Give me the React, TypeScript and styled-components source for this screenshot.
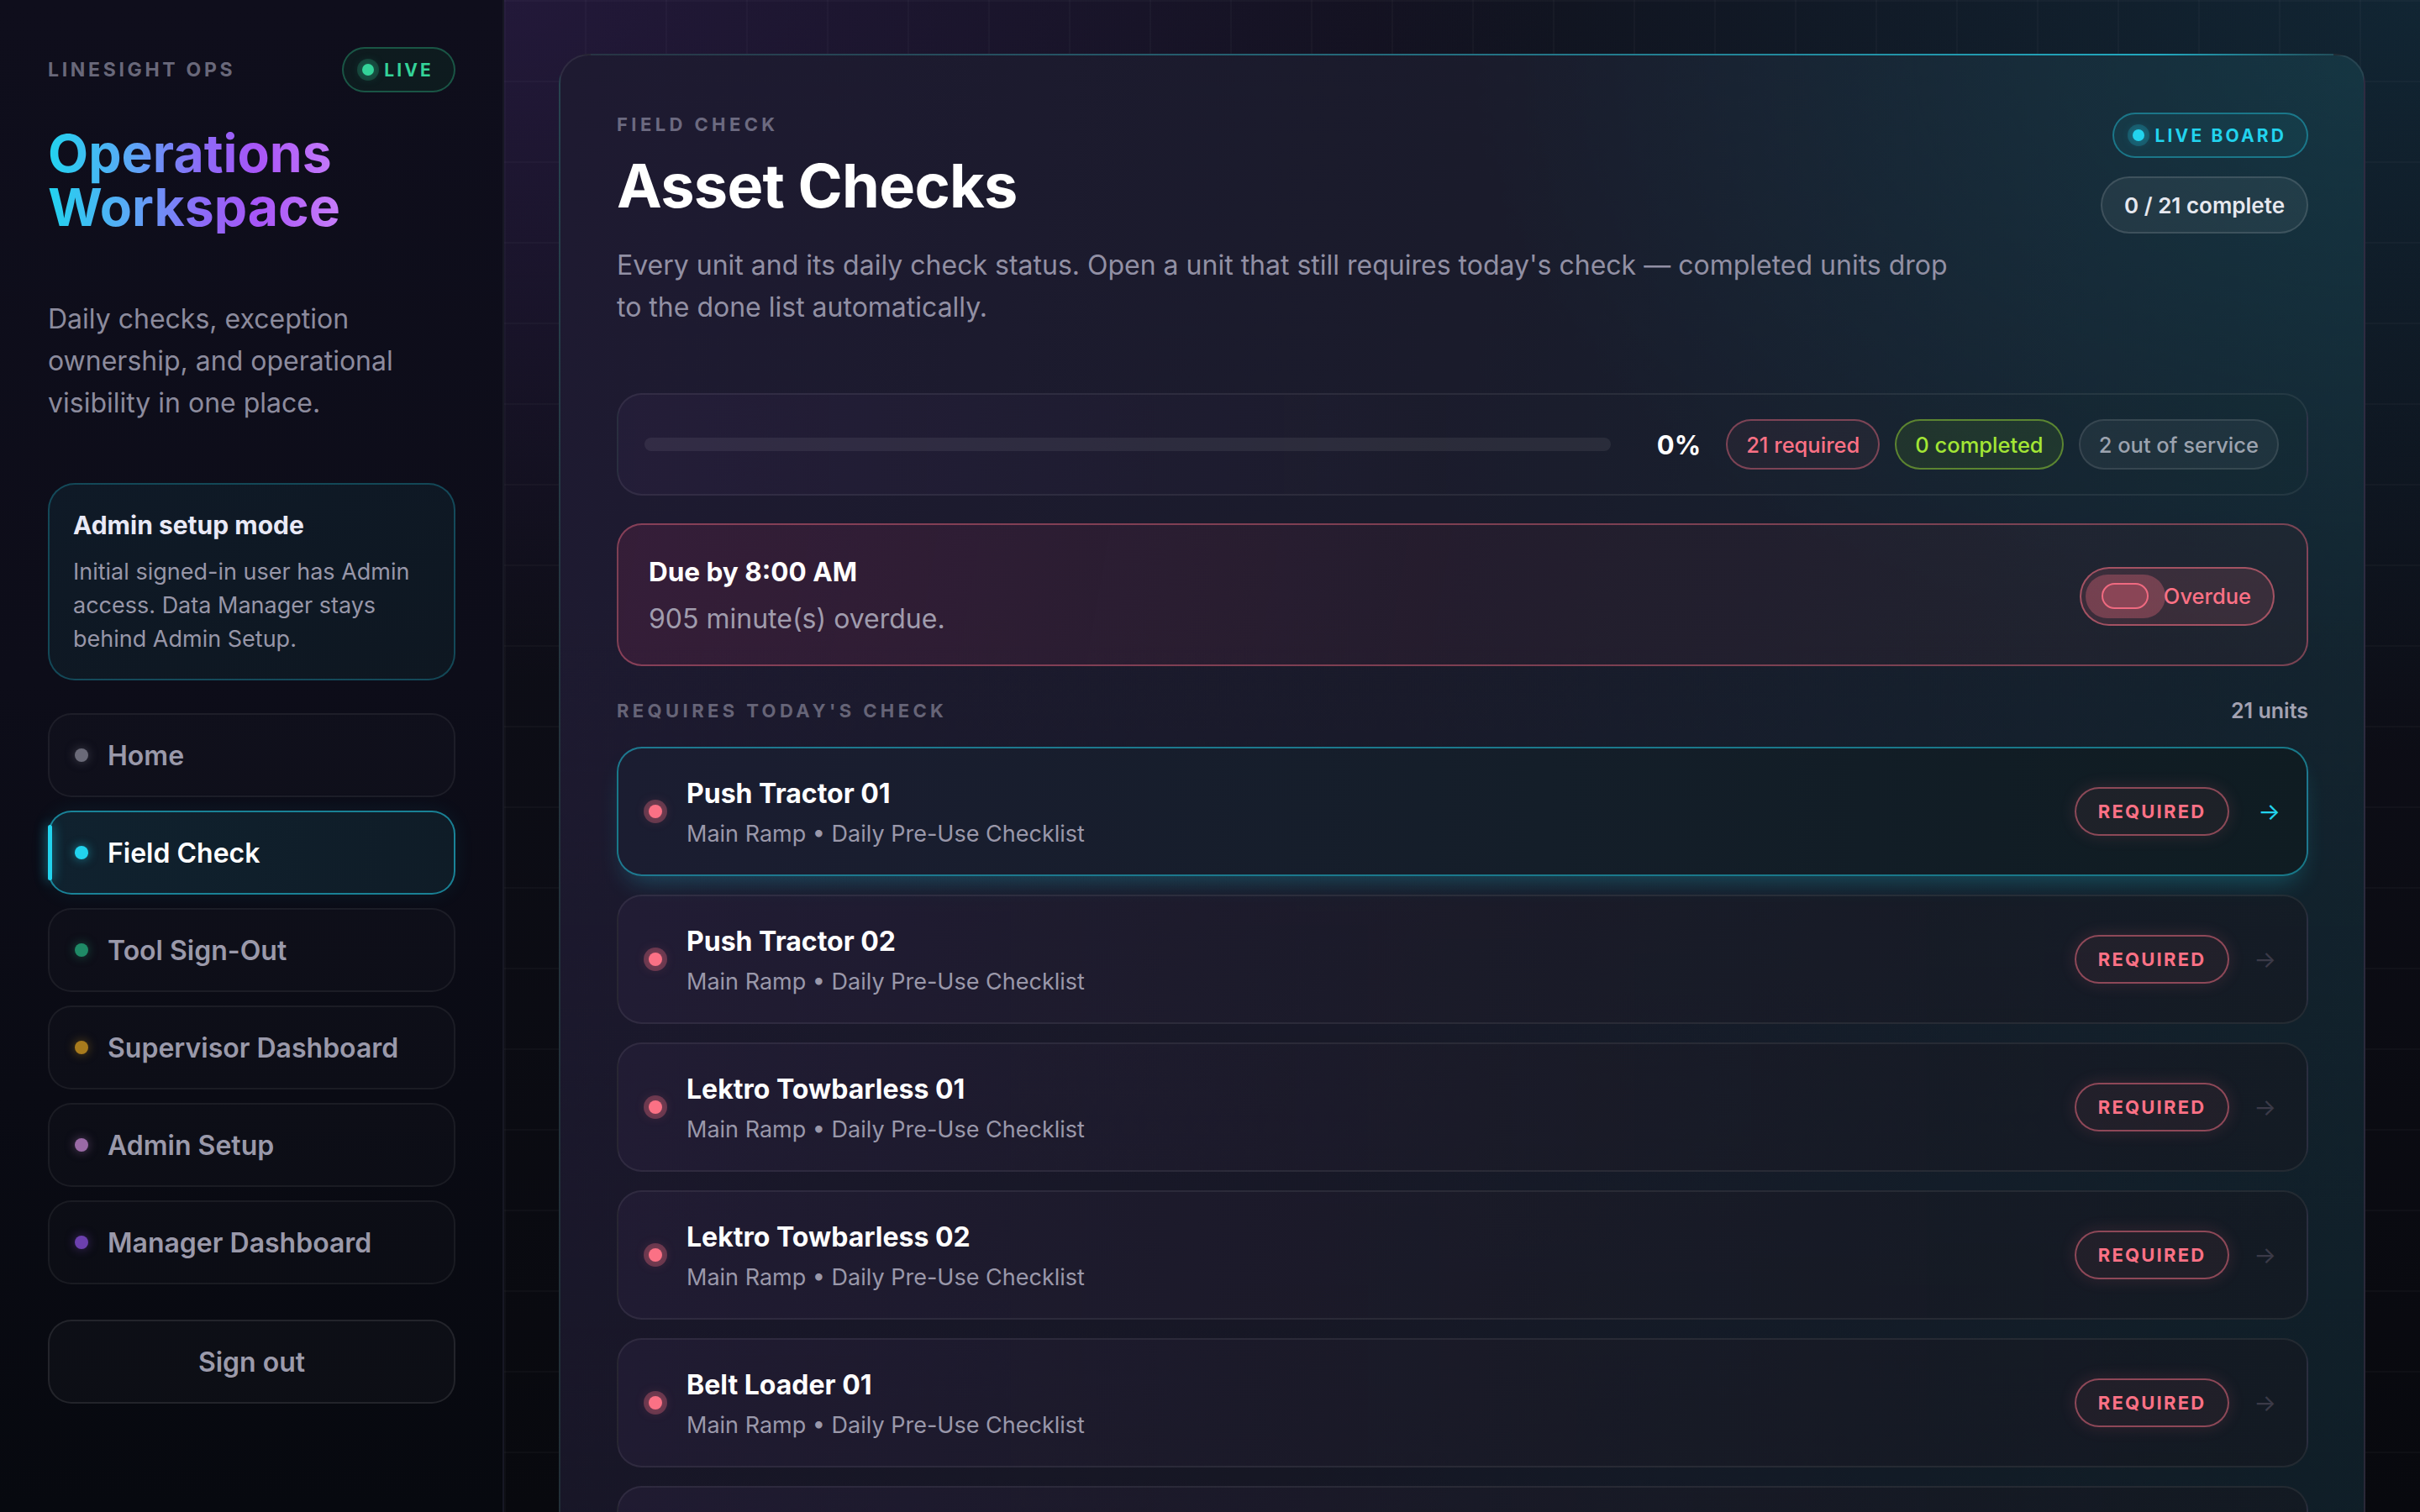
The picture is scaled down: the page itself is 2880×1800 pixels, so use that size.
import styled, { createGlobalStyle } from "styled-components";

const GlobalStyle = createGlobalStyle`
    * { box-sizing: border-box; }
    html, body {
        margin: 0;
        padding: 0;
        background: #08090f;
    }
    body {
        font-family: Inter, "Noto Sans", "Liberation Sans", sans-serif;
        color: #f4f4f7;
        -webkit-font-smoothing: antialiased;
    }
`

const Shell = styled.div`
    display: grid;
    grid-template-columns: 600px 1fr;
    height: 100vh;
    overflow: hidden;
`

/* ---------- sidebar ---------- */

const Sidebar = styled.aside`
    display: flex;
    flex-direction: column;
    padding: 56px 56px 0 57px;
    background: linear-gradient(180deg, #0f0e1c 0%, #0d0d19 45%, #07090f 100%);
    border-right: 2px solid #171824;
`

const BrandRow = styled.div`
    display: flex;
    justify-content: space-between;
    align-items: center;
    height: 54px;
`

const Brand = styled.div`
    font-size: 23px;
    font-weight: 700;
    letter-spacing: 0.16em;
    color: #69687a;
`

const StatusPill = styled.div<{ tone: "green" | "cyan" }>`
    display: flex;
    align-items: center;
    gap: 12px;
    height: 54px;
    padding: 0 24px 0 22px;
    border-radius: 999px;
    font-size: 21px;
    font-weight: 700;
    letter-spacing: 0.15em;

    ${({ tone }) => tone === "green" ? `
        color: #34d399;
        border: 2px solid rgba(52,211,153,0.32);
        background: rgba(14,36,33,0.6);
    ` : `
        color: #22d3ee;
        border: 2px solid rgba(34,211,238,0.4);
        background: rgba(22,70,84,0.45);
    `}
`

const PulseDot = styled.span<{ color: string }>`
    width: 14px;
    height: 14px;
    border-radius: 50%;
    background: ${({ color }) => color};
    box-shadow: 0 0 0 6px ${({ color }) => color}33, 0 0 14px ${({ color }) => color}66;
`

const SideTitle = styled.h1`
    margin: 40px 0 0;
    width: fit-content;
    font-size: 62.5px;
    line-height: 64px;
    font-weight: 700;
    background: linear-gradient(90deg, #22d3ee 0%, #5aa8f6 28%, #8b6cf7 52%, #a855f7 72%, #c77dfa 100%);
    -webkit-background-clip: text;
    background-clip: text;
    color: transparent;
`

const Lede = styled.p`
    margin: 77px 0 0;
    font-size: 32px;
    line-height: 50px;
    color: #8c8b9d;
`

const ModeCard = styled.div`
    margin-top: 70px;
    padding: 28px 28px 27px;
    border: 2px solid rgba(34,211,238,0.26);
    border-radius: 32px;
    background: linear-gradient(160deg, #0f1a27 0%, #0e1721 100%);
`

const ModeTitle = styled.div`
    font-size: 30px;
    line-height: 40px;
    font-weight: 700;
    color: #e9e9f6;
`

const ModeText = styled.div`
    margin-top: 16px;
    font-size: 27px;
    line-height: 40px;
    color: #9796a8;
`

const Nav = styled.nav`
    display: flex;
    flex-direction: column;
    gap: 16px;
    margin-top: 39px;
`

const NavItem = styled.div<{ active?: boolean }>`
    position: relative;
    display: flex;
    align-items: center;
    gap: 23px;
    height: 100px;
    padding: 0 30px;
    border-radius: 28px;
    font-size: 32px;
    font-weight: 600;

    ${({ active }) => active ? `
        color: #ffffff;
        border: 2px solid rgba(34,211,238,0.55);
        background: linear-gradient(90deg, #10222f 0%, #0f1c27 100%);
        box-shadow: 0 0 24px rgba(34,211,238,0.08);
    ` : `
        color: #9a99aa;
        border: 2px solid rgba(255,255,255,0.06);
        background: rgba(255,255,255,0.015);
    `}
`

const ActiveBar = styled.span`
    position: absolute;
    left: -2px;
    top: 15px;
    bottom: 15px;
    width: 5px;
    border-radius: 3px;
    background: #22d3ee;
    box-shadow: 0 0 14px rgba(34,211,238,0.7);
`

const NavDot = styled.span<{ color: string }>`
    flex: none;
    width: 16px;
    height: 16px;
    border-radius: 50%;
    background: ${({ color }) => color};
    box-shadow: 0 0 12px ${({ color }) => color}88;
`

const SignOut = styled.button`
    margin-top: 42px;
    height: 100px;
    border: 2px solid rgba(255,255,255,0.09);
    border-radius: 28px;
    background: rgba(255,255,255,0.025);
    font-family: inherit;
    font-size: 32px;
    font-weight: 600;
    color: #9c9bab;
`

/* ---------- main ---------- */

const Main = styled.main`
    padding: 64px 65px 0 65px;
    overflow: hidden;
    background-color: #0a0b12;
    background-image:
        linear-gradient(rgba(255,255,255,0.022) 2px, transparent 2px),
        linear-gradient(90deg, rgba(255,255,255,0.022) 2px, transparent 2px),
        radial-gradient(ellipse 55% 45% at 0% 0%, rgba(80,44,130,0.28), transparent 100%),
        radial-gradient(ellipse 55% 50% at 100% 0%, rgba(18,110,130,0.22), transparent 100%),
        linear-gradient(180deg, #11111d 0%, #08090e 100%);
    background-size: 96px 96px, 96px 96px, auto, auto, auto;
`

const Panel = styled.section`
    position: relative;
    min-height: 2000px;
    padding: 68px 66px 68px 67px;
    border: 2px solid rgba(255,255,255,0.08);
    border-radius: 36px;
    background:
        radial-gradient(ellipse 50% 35% at 100% 0%, rgba(30,150,170,0.16), transparent 100%),
        linear-gradient(180deg, transparent 30%, rgba(10,10,16,0.35) 100%),
        linear-gradient(100deg, #1e1a31 0%, #1a1b2b 45%, #112630 100%);

    &::before {
        content: "";
        position: absolute;
        top: -2px;
        left: 36px;
        right: 36px;
        height: 2px;
        background: linear-gradient(90deg, rgba(34,211,238,0.08) 0%, rgba(34,211,238,0.45) 55%, rgba(34,211,238,0.75) 90%, rgba(34,211,238,0.2) 100%);
    }
`

const Header = styled.header`
    display: flex;
    justify-content: space-between;
    align-items: flex-start;
`

const HeaderText = styled.div`
    display: flex;
    flex-direction: column;
`

const Eyebrow = styled.div`
    font-size: 22px;
    line-height: 28px;
    font-weight: 700;
    letter-spacing: 0.2em;
    color: #6c6a80;
`

const PageTitle = styled.h2`
    margin: 19px 0 0;
    font-size: 72px;
    line-height: 80px;
    font-weight: 700;
    letter-spacing: -0.01em;
    color: #ffffff;
`

const Description = styled.p`
    margin: 30px 0 0;
    max-width: 1600px;
    font-size: 32px;
    line-height: 50px;
    color: #9290a4;
`

const HeaderBadges = styled.div`
    display: flex;
    flex-direction: column;
    align-items: flex-end;
    gap: 22px;
`

const CompleteBadge = styled.div`
    display: flex;
    align-items: center;
    height: 68px;
    padding: 0 26px;
    border-radius: 999px;
    border: 2px solid rgba(255,255,255,0.12);
    background: rgba(255,255,255,0.06);
    font-size: 26px;
    font-weight: 600;
    color: #e6e8ef;
`

const StatsBar = styled.div`
    display: flex;
    align-items: center;
    height: 122px;
    margin-top: 77px;
    padding: 0 33px 0 31px;
    border: 2px solid rgba(255,255,255,0.07);
    border-radius: 30px;
    background: linear-gradient(90deg, rgba(44,34,66,0.45) 0%, rgba(30,30,46,0.35) 50%, rgba(20,44,52,0.35) 100%);
`

const Track = styled.div`
    flex: 1;
    height: 16px;
    border-radius: 999px;
    background: rgba(255,255,255,0.07);
    overflow: hidden;
`

const Fill = styled.div`
    height: 100%;
    background: linear-gradient(90deg, #22d3ee, #a855f7);
`

const Percent = styled.div`
    margin: 0 30px 0 55px;
    font-size: 31px;
    font-weight: 700;
    color: #ffffff;
`

const Counts = styled.div`
    display: flex;
    gap: 18px;
`

const CountPill = styled.div<{ tone: "red" | "lime" | "grey" }>`
    display: flex;
    align-items: center;
    height: 60px;
    padding: 0 22px;
    border-radius: 999px;
    font-size: 25.5px;
    font-weight: 500;

    ${({ tone }) => tone === "red" ? `
        color: #fb7185;
        border: 2px solid rgba(251,113,133,0.42);
        background: rgba(251,113,133,0.05);
    ` : tone === "lime" ? `
        color: #a3e635;
        border: 2px solid rgba(163,230,53,0.45);
        background: rgba(132,204,22,0.1);
    ` : `
        color: #9ca3af;
        border: 2px solid rgba(255,255,255,0.1);
        background: rgba(255,255,255,0.05);
    `}
`

const DueCard = styled.div`
    display: flex;
    justify-content: space-between;
    align-items: center;
    height: 170px;
    margin-top: 33px;
    padding: 3px 38px 0 36px;
    border: 2px solid rgba(251,113,133,0.42);
    border-radius: 30px;
    background: linear-gradient(100deg, rgba(92,36,70,0.38) 0%, rgba(60,34,52,0.3) 50%, rgba(56,40,50,0.3) 100%);
`

const DueText = styled.div`
    display: flex;
    flex-direction: column;
    gap: 14px;
`

const DueTitle = styled.div`
    font-size: 31.5px;
    line-height: 40px;
    font-weight: 700;
    color: #ffffff;
`

const DueNote = styled.div`
    font-size: 32px;
    line-height: 44px;
    color: #a09cad;
`

const OverdueToggle = styled.div`
    display: flex;
    align-items: center;
    height: 70px;
    padding: 0 26px 0 5px;
    border: 2px solid rgba(251,113,133,0.55);
    border-radius: 999px;
    background: rgba(251,113,133,0.12);
    font-size: 25.5px;
    font-weight: 500;
    color: #fb7185;
`

const Knob = styled.span`
    display: flex;
    align-items: center;
    justify-content: center;
    width: 95px;
    height: 52px;
    margin-right: -2px;
    border-radius: 999px;
    background: rgba(251,113,133,0.3);
`

const KnobInner = styled.span`
    width: 56px;
    height: 31px;
    border-radius: 999px;
    border: 2px solid #ef6a80;
    background: #8a4556;
`

const SectionHead = styled.div`
    display: flex;
    justify-content: space-between;
    align-items: center;
    height: 30px;
    margin: 38px 0 28px;
`

const SectionLabel = styled.div`
    font-size: 22px;
    font-weight: 700;
    letter-spacing: 0.2em;
    color: #666477;
`

const UnitCount = styled.div`
    font-size: 25px;
    font-weight: 600;
    color: #a3a2b2;
`

const UnitList = styled.div`
    display: flex;
    flex-direction: column;
    gap: 22px;
`

const UnitRow = styled.div<{ active?: boolean }>`
    display: flex;
    align-items: center;
    gap: 29px;
    height: 154px;
    padding: 0 34px 0 36px;
    border-radius: 30px;

    ${({ active }) => active ? `
        border: 2px solid rgba(34,211,238,0.5);
        background: linear-gradient(90deg, #1b1d31 0%, #141e29 55%, #0f1c22 100%);
        box-shadow: 0 16px 30px -12px rgba(34,211,238,0.3);
    ` : `
        border: 2px solid rgba(255,255,255,0.07);
        background: linear-gradient(90deg, rgba(40,32,60,0.5) 0%, rgba(30,28,40,0.45) 55%, rgba(22,22,30,0.5) 100%);
    `}
`

const UnitDot = styled.span`
    flex: none;
    width: 16px;
    height: 16px;
    border-radius: 50%;
    background: #fb7185;
    box-shadow: 0 0 0 6px rgba(251,113,133,0.3), 0 0 16px rgba(251,113,133,0.4);
`

const UnitInfo = styled.div`
    flex: 1;
    display: flex;
    flex-direction: column;
    gap: 8px;
    padding-top: 6px;
`

const UnitName = styled.div`
    font-size: 32px;
    line-height: 40px;
    font-weight: 700;
    color: #ffffff;
`

const UnitMeta = styled.div`
    font-size: 27px;
    line-height: 40px;
    color: #9a98aa;
`

const RequiredTag = styled.div`
    display: flex;
    align-items: center;
    height: 58px;
    padding: 0 26px;
    border: 2px solid rgba(251,113,133,0.5);
    border-radius: 999px;
    background: rgba(251,113,133,0.06);
    box-shadow: 0 0 20px rgba(251,113,133,0.14);
    font-size: 22px;
    font-weight: 700;
    letter-spacing: 0.1em;
    color: #fb7185;
`

const Arrow = styled.span<{ active?: boolean }>`
    margin-left: 2px;
    font-size: 28px;
    color: ${({ active }) => active ? "#22d3ee" : "#3b3a48"};
    transform: translateX(${({ active }) => active ? "3px" : "-2px"});
`

const navItems = [
    { label: "Home", color: "#6a6a78" },
    { label: "Field Check", color: "#22d3ee", active: true },
    { label: "Tool Sign-Out", color: "#1f8a66" },
    { label: "Supervisor Dashboard", color: "#a87b1d" },
    { label: "Admin Setup", color: "#9a6aa6" },
    { label: "Manager Dashboard", color: "#6c40ae" },
]

const units = [
    "Push Tractor 01",
    "Push Tractor 02",
    "Lektro Towbarless 01",
    "Lektro Towbarless 02",
    "Belt Loader 01",
    "Belt Loader 02",
    "Belt Loader 03",
]

const App = () => {

    const completed = 0
    const total = 21

    return (
        <>
            <GlobalStyle />
            <Shell>
                <Sidebar>
                    <BrandRow>
                        <Brand>LINESIGHT OPS</Brand>
                        <StatusPill tone="green"><PulseDot color="#34d399" />LIVE</StatusPill>
                    </BrandRow>
                    <SideTitle>Operations<br />Workspace</SideTitle>
                    <Lede>Daily checks, exception ownership, and operational visibility in one place.</Lede>
                    <ModeCard>
                        <ModeTitle>Admin setup mode</ModeTitle>
                        <ModeText>Initial signed-in user has Admin access. Data Manager stays behind Admin Setup.</ModeText>
                    </ModeCard>
                    <Nav>
                        {navItems.map(item => (
                            <NavItem key={item.label} active={item.active}>
                                {item.active && <ActiveBar />}
                                <NavDot color={item.color} />
                                {item.label}
                            </NavItem>
                        ))}
                    </Nav>
                    <SignOut>Sign out</SignOut>
                </Sidebar>

                <Main>
                    <Panel>
                        <Header>
                            <HeaderText>
                                <Eyebrow>FIELD CHECK</Eyebrow>
                                <PageTitle>Asset Checks</PageTitle>
                                <Description>
                                    Every unit and its daily check status. Open a unit that still requires today's check — completed units drop to the done list automatically.
                                </Description>
                            </HeaderText>
                            <HeaderBadges>
                                <StatusPill tone="cyan"><PulseDot color="#22d3ee" />LIVE BOARD</StatusPill>
                                <CompleteBadge>{completed} / {total} complete</CompleteBadge>
                            </HeaderBadges>
                        </Header>

                        <StatsBar>
                            <Track><Fill style={{ width: `${(completed / total) * 100}%` }} /></Track>
                            <Percent>{Math.round((completed / total) * 100)}%</Percent>
                            <Counts>
                                <CountPill tone="red">21 required</CountPill>
                                <CountPill tone="lime">0 completed</CountPill>
                                <CountPill tone="grey">2 out of service</CountPill>
                            </Counts>
                        </StatsBar>

                        <DueCard>
                            <DueText>
                                <DueTitle>Due by 8:00 AM</DueTitle>
                                <DueNote>905 minute(s) overdue.</DueNote>
                            </DueText>
                            <OverdueToggle>
                                <Knob><KnobInner /></Knob>
                                Overdue
                            </OverdueToggle>
                        </DueCard>

                        <SectionHead>
                            <SectionLabel>REQUIRES TODAY'S CHECK</SectionLabel>
                            <UnitCount>21 units</UnitCount>
                        </SectionHead>

                        <UnitList>
                            {units.map((name, i) => (
                                <UnitRow key={name} active={i === 0}>
                                    <UnitDot />
                                    <UnitInfo>
                                        <UnitName>{name}</UnitName>
                                        <UnitMeta>Main Ramp • Daily Pre-Use Checklist</UnitMeta>
                                    </UnitInfo>
                                    <RequiredTag>REQUIRED</RequiredTag>
                                    <Arrow active={i === 0}>→</Arrow>
                                </UnitRow>
                            ))}
                        </UnitList>
                    </Panel>
                </Main>
            </Shell>
        </>
    )
}

export default App;
